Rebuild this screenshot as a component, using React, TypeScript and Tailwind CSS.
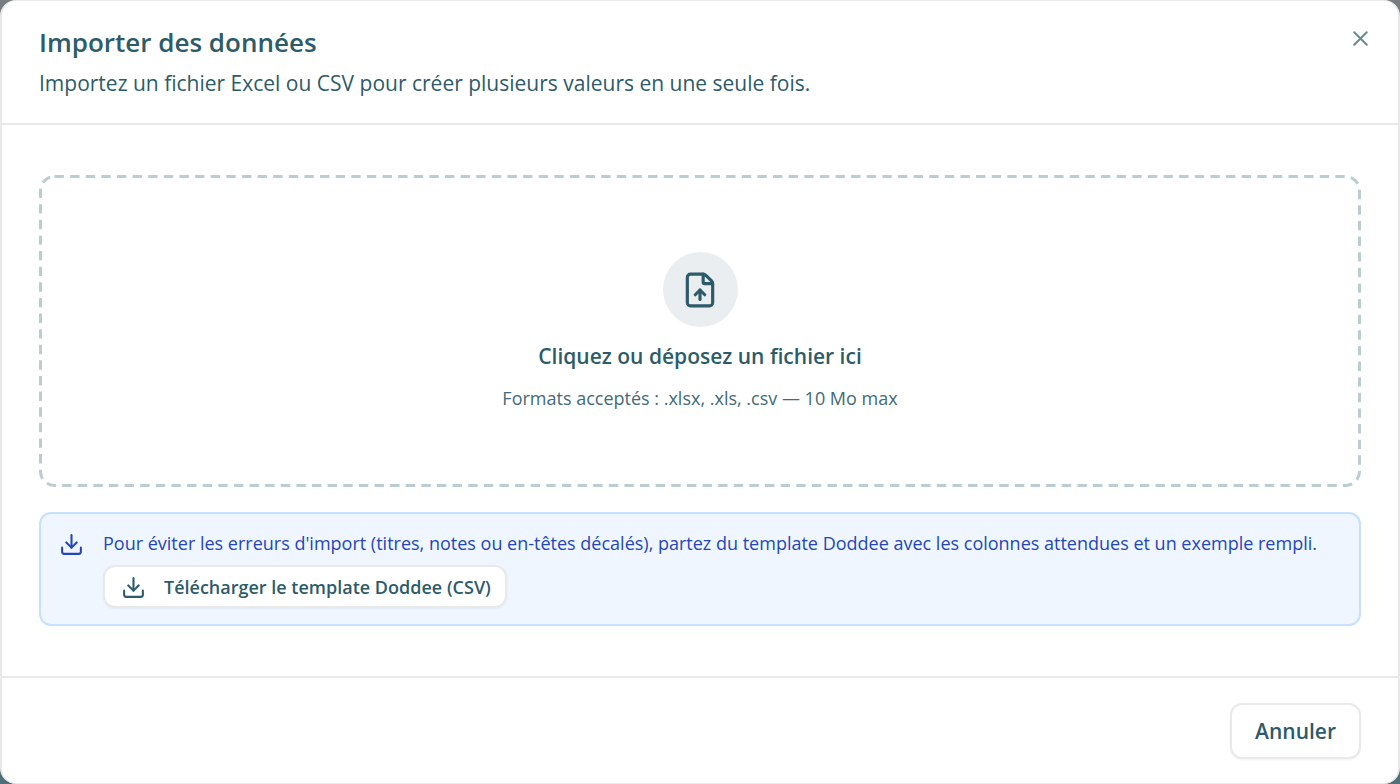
import { Download, FileUp, X } from "lucide-react"
import { useRef, useState } from "react"

interface DropzoneProps {
    accept: string
    onFile: (file: File) => void
}

function Dropzone({ accept, onFile }: DropzoneProps) {
    const inputRef = useRef<HTMLInputElement>(null)

    return (
        <div className="relative">
            <button
                type="button"
                onClick={() => inputRef.current?.click()}
                onDragOver={(e) => e.preventDefault()}
                onDrop={(e) => {
                    e.preventDefault()
                    const file = e.dataTransfer.files[0]
                    if (file) onFile(file)
                }}
                className="flex w-full cursor-pointer flex-col items-center rounded-2xl px-6 pt-[77px] pb-[75px]"
            >
                <span className="flex size-[75px] items-center justify-center rounded-full bg-[#eaeef1]">
                    <FileUp className="size-[38px]" />
                </span>
                <span className="mt-[13px] text-[21px] leading-8 font-semibold">Cliquez ou déposez un fichier ici</span>
                <span className="mt-3 text-[18px] leading-7 text-[#426b77]">
                    Formats acceptés : .xlsx, .xls, .csv — 10 Mo max
                </span>
            </button>

            {/* Dashed outline */}
            <svg className="pointer-events-none absolute inset-0 size-full" aria-hidden="true">
                <rect
                    x="1.5"
                    y="1.5"
                    rx="14"
                    className="h-[calc(100%-3px)] w-[calc(100%-3px)] fill-none stroke-[#bccdd1]"
                    strokeWidth="3"
                    strokeDasharray="9.4 6.22"
                />
            </svg>

            <input
                ref={inputRef}
                type="file"
                accept={accept}
                aria-label="Fichier à importer"
                className="hidden"
                onChange={(e) => {
                    const file = e.target.files?.[0]
                    if (file) onFile(file)
                }}
            />
        </div>
    )
}

export default function App() {
    const [, setFile] = useState<File | null>(null)

    return (
        <div className="min-h-screen bg-linear-to-b from-[#777d80] to-[#507078] font-['Open_Sans',sans-serif] text-[#2d5b69]">
            <div
                role="dialog"
                aria-labelledby="import-title"
                aria-describedby="import-description"
                className="flex min-h-screen w-full flex-col rounded-2xl border border-x-2 border-[#e9e9e9] bg-white"
            >
                {/* Header */}
                <header className="flex items-start justify-between border-b-2 border-[#e9e9e9] pt-[25px] pr-[25px] pb-6 pl-[37px]">
                    <div>
                        <h2 id="import-title" className="text-[26px] leading-8 font-semibold">
                            Importer des données
                        </h2>
                        <p id="import-description" className="mt-[9px] text-[21px] leading-8">
                            Importez un fichier Excel ou CSV pour créer plusieurs valeurs en une seule fois.
                        </p>
                    </div>
                    <button type="button" aria-label="Fermer" className="cursor-pointer opacity-70">
                        <X className="size-[25px]" />
                    </button>
                </header>

                {/* Content */}
                <div className="flex flex-1 flex-col gap-[25px] px-[37px] py-[50px]">
                    <Dropzone accept=".xlsx,.xls,.csv" onFile={setFile} />

                    <div className="flex items-start gap-[19px] rounded-xl border-2 border-[#c6e0ff] bg-[#eff6ff] px-[18px] pt-[15px] pb-4">
                        <Download className="mt-[3px] size-[25px] shrink-0 text-[#2446ba]" />
                        <div className="flex flex-col items-start gap-2">
                            <p className="text-[18px] leading-7 text-[#2446ba]">
                                Pour éviter les erreurs d'import (titres, notes ou en-têtes décalés), partez du template
                                Doddee avec les colonnes attendues et un exemple rempli.
                            </p>
                            <button
                                type="button"
                                className="flex cursor-pointer items-center gap-[18px] rounded-xl border-2 border-[#e9e9e9] bg-white pt-[6px] pr-[14px] pb-[5px] pl-4 text-[18px] leading-7 font-semibold shadow-xs"
                            >
                                <Download className="size-[25px]" />
                                Télécharger le template Doddee (CSV)
                            </button>
                        </div>
                    </div>
                </div>

                {/* Footer */}
                <footer className="flex justify-end border-t-2 border-[#e9e9e9] px-[37px] pt-[25px] pb-6">
                    <button
                        type="button"
                        className="cursor-pointer rounded-xl border-2 border-[#e9e9e9] bg-white px-[23px] py-[10px] text-[21px] leading-8 font-semibold shadow-xs"
                    >
                        Annuler
                    </button>
                </footer>
            </div>
        </div>
    )
}
